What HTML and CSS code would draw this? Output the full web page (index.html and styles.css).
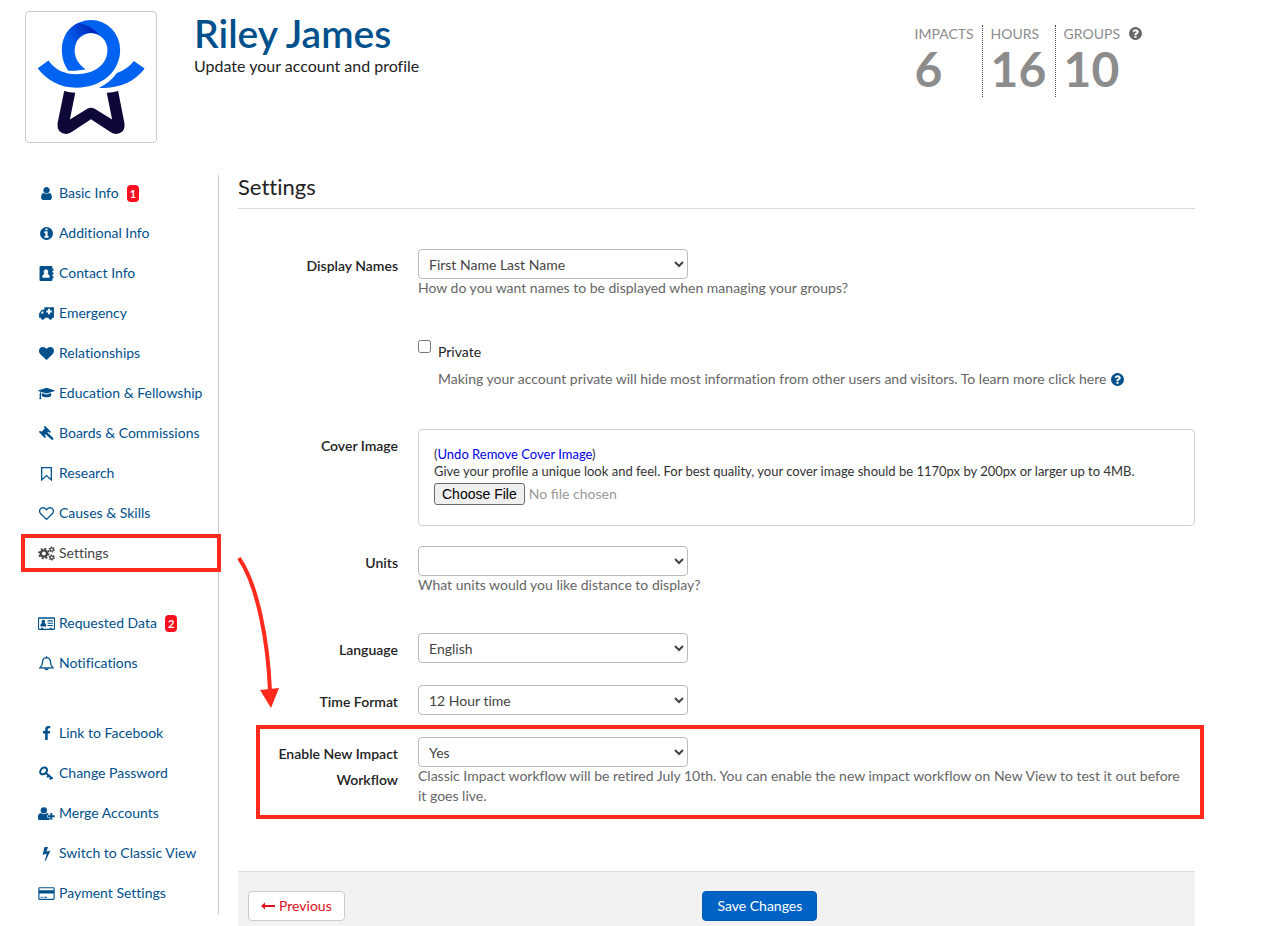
FILE: index.html
```
<!DOCTYPE html>
<html lang="en">

<head>
  <meta charset="UTF-8" />
  <meta name="viewport" content="width=device-width, initial-scale=1.0" />
  <title>Settings</title>
  <link rel="stylesheet" href="styles.css">
</head>

<body>
  <svg class="sprite" aria-hidden="true">
    <symbol id="question" viewBox="0 0 1792 1792">
      <path d="M1024 1376v-192q0-14-9-23t-23-9h-192q-14 0-23 9t-9 23v192q0 14 9 23t23 9h192q14 0 23-9t9-23zm256-672q0-88-55.500-163t-138.500-116-170-41q-243 0-371 213-15 24 8 42l132 100q7 6 19 6 16 0 25-12 53-68 86-92 34-24 86-24 48 0 85.500 26t37.500 59q0 38-20 61t-68 45q-63 28-115.500 86.500t-52.500 125.500v36q0 14 9 23t23 9h192q14 0 23-9t9-23q0-19 21.500-49.500t54.500-49.500q32-18 49-28.500t46-35 44.500-48 28-60.500 12.500-81zm384 192q0 209-103 385.500t-279.500 279.500-385.500 103-385.500-103-279.500-279.500-103-385.500 103-385.500 279.500-279.500 385.500-103 385.500 103 279.500 279.500 103 385.500z" />
    </symbol>
  </svg>

  <div class="page">
    <header class="header">
      <div class="avatar">
        <svg viewBox="79 37 388 388" aria-label="Logo">
          <defs>
            <linearGradient id="fold" x1="270" y1="75" x2="200" y2="115" gradientUnits="userSpaceOnUse">
              <stop offset="0" stop-color="#0026b8" />
              <stop offset="1" stop-color="#0062f0" />
            </linearGradient>
          </defs>
          <path fill="#0062f0" d="M205 212C191 192 186 172 186 150A87 89 0 0 1 360 150C360 215 305 263 230 263C180 263 142 242 114 205L146 182C165 210 195 223 228 223C282 223 322 196 322 150A49 50 0 0 0 224 150C224 175 237 195 257 208C240 212 220 213 205 212Z" />
          <path fill="url(#fold)" d="M236 69C260 74 282 87 299 106C272 93 228 98 224 148L186 148C187 110 206 82 236 69Z" />
          <path fill="#0062f0" d="M297 263C320 252 338 236 350 219C370 212 388 200 401 183L433 206C403 248 350 268 297 263Z" />
          <path fill="#0d0838" d="M193 273Q209 278 226 278L210 358L262 326Q273 320 284 326L336 358L320 278Q338 278 354 273L373 370Q376 399 348 401Q340 401 332 396L273 357L214 396Q206 401 198 401Q171 399 173 370Z" />
        </svg>
      </div>
      <div class="title">
        <h1>Riley James</h1>
        <p>Update your account and profile</p>
      </div>
      <dl class="stats">
        <div class="stat"><dt>IMPACTS</dt><dd>6</dd></div>
        <div class="stat"><dt>HOURS</dt><dd>16</dd></div>
        <div class="stat"><dt>GROUPS</dt><dd>10</dd></div>
        <svg class="help-icon"><use href="#question" /></svg>
      </dl>
    </header>

    <div class="columns">
      <nav class="sidebar">
        <ul>
          <li><a href="#"><span class="icon"><svg viewBox="0 0 1792 1792"><path d="M1536 1399q0 109-62.500 187t-150.500 78h-854q-88 0-150.500-78t-62.500-187q0-85 8.500-160.500t31.500-152 58.500-131 94-89 134.500-34.500q131 128 313 128t313-128q76 0 134.500 34.500t94 89 58.500 131 31.500 152 8.500 160.500zm-256-887q0 159-112.500 271.500t-271.500 112.500-271.500-112.500-112.500-271.500 112.500-271.500 271.500-112.500 271.500 112.500 112.500 271.500z" /></svg></span>Basic Info</a><span class="badge">1</span></li>
          <li><a href="#"><span class="icon"><svg viewBox="0 0 1792 1792"><path d="M1152 1376v-160q0-14-9-23t-23-9h-96v-512q0-14-9-23t-23-9h-320q-14 0-23 9t-9 23v160q0 14 9 23t23 9h96v320h-96q-14 0-23 9t-9 23v160q0 14 9 23t23 9h448q14 0 23-9t9-23zm-128-896v-160q0-14-9-23t-23-9h-192q-14 0-23 9t-9 23v160q0 14 9 23t23 9h192q14 0 23-9t9-23zm640 416q0 209-103 385.500t-279.500 279.500-385.500 103-385.500-103-279.500-279.500-103-385.500 103-385.500 279.500-279.500 385.500-103 385.500 103 279.500 279.500 103 385.500z" /></svg></span>Additional Info</a></li>
          <li><a href="#"><span class="icon"><svg viewBox="0 0 14 14"><path fill-rule="evenodd" d="M1.500 0h10q1 0 1 1v1.500h1v2h-1v1.500h1v2h-1v1.500h1v2h-1v1.500q0 1-1 1h-10q-1 0-1-1v-12q0-1 1-1zM6.500 3a2.200 2.400 0 0 0-1.400 4.200q-2.100.6-2.100 3 0 .8.800.8h5.400q.8 0 .8-.8 0-2.400-2.100-3a2.200 2.400 0 0 0-1.400-4.200z" /></svg></span>Contact Info</a></li>
          <li><a href="#"><span class="icon"><svg class="wide" viewBox="0 0 16 14"><path fill-rule="evenodd" d="M6 1h9v10h-1.300a2 2 0 0 1-3.900 0h-3.300a2 2 0 0 1-3.900 0h-1.600v-4l2.500-3.500h2.500zM9.500 2.500v1.700h-1.700v1.800h1.700v1.700h1.800v-1.700h1.700v-1.800h-1.700v-1.700zM4 4.800l-1.500 2.200h2.500v-2.200z" /><circle cx="4.500" cy="11.200" r="1.500" /><circle cx="11.700" cy="11.200" r="1.500" /></svg></span>Emergency</a></li>
          <li><a href="#"><span class="icon"><svg viewBox="0 0 1792 1792"><path d="M896 1664q-26 0-44-18l-624-602q-10-8-27.500-26t-55.500-65.500-68-97.500-53.500-121-23.500-138q0-220 127-344t351-124q62 0 126.500 21.500t120 58 95.500 68.500 76 68q36-36 76-68t95.500-68.500 120-58 126.500-21.500q224 0 351 124t127 344q0 221-229 450l-623 600q-18 18-44 18z" /></svg></span>Relationships</a></li>
          <li><a href="#"><span class="icon"><svg class="wide" viewBox="0 0 2304 1792"><path d="M1774 836l18 316q4 69-82 128t-235 93.500-323 34.500-323-34.500-235-93.500-82-128l18-316 574 181q22 7 48 7t48-7zm530-324q0 23-22 31l-1120 352q-4 1-10 1t-10-1l-652-206q-43 34-71 111.500t-34 178.500q63 36 63 109 0 69-58 107l58 433q2 14-8 25-9 11-24 11h-192q-15 0-24-11-10-11-8-25l58-433q-58-38-58-107 0-73 65-111 11-207 98-330l-333-104q-22-8-22-31t22-31l1120-352q4-1 10-1t10 1l1120 352q22 8 22 31z" /></svg></span>Education &amp; Fellowship</a></li>
          <li><a href="#"><span class="icon"><svg viewBox="0 0 14 14"><g fill="none" stroke="currentColor"><path d="M3.400 7.400l4-4" stroke-width="4.400" /><path d="M1 5.500l4.500 4.500M5.500 1l4.500 4.500" stroke-width="1.800" stroke-linecap="round" /><path d="M6 6l6.300 5.800" stroke-width="2.400" stroke-linecap="round" /></g></svg></span>Boards &amp; Commissions</a></li>
          <li><a href="#"><span class="icon"><svg class="line" viewBox="0 0 14 14"><path d="M2.500 1.500h9v11.500l-4.500-4-4.500 4z" /></svg></span>Research</a></li>
          <li><a href="#"><span class="icon"><svg class="line" viewBox="0 0 14 14"><path d="M7 12.500l-5.400-5.200c-2-2.400-.9-5.700 2-5.800 1.700 0 2.700 1.200 3.400 2 .7-.8 1.700-2 3.400-2 2.900.1 4 3.400 2 5.800z" /></svg></span>Causes &amp; Skills</a></li>
          <li class="active"><a href="#"><span class="icon"><svg class="wide" viewBox="0 0 16 14"><circle cx="5.500" cy="7" r="3" fill="none" stroke="currentColor" stroke-width="2.200" /><circle cx="5.500" cy="7" r="4.600" fill="none" stroke="currentColor" stroke-width="1.600" stroke-dasharray="1.800 1.813" /><circle cx="13" cy="3.200" r="1.600" fill="none" stroke="currentColor" stroke-width="1.200" /><circle cx="13" cy="3.200" r="2.400" fill="none" stroke="currentColor" stroke-width="1" stroke-dasharray="1.200 1.313" /><circle cx="13" cy="10.800" r="1.600" fill="none" stroke="currentColor" stroke-width="1.200" /><circle cx="13" cy="10.800" r="2.400" fill="none" stroke="currentColor" stroke-width="1" stroke-dasharray="1.200 1.313" /></svg></span>Settings</a></li>
        </ul>
        <ul>
          <li><a href="#"><span class="icon"><svg class="wide" viewBox="0 0 16 14"><path fill-rule="evenodd" d="M1 1h14q1 0 1 1v10q0 1-1 1h-14q-1 0-1-1v-10q0-1 1-1zM1 2.500v9.500h2v-1h2v1h6v-1h2v1h2v-9.500z" /><circle cx="5" cy="5.200" r="1.700" /><path d="M2.200 9.800q0-3 1.500-3.300h2.600q1.500.3 1.500 3.300zM9 4h5v1h-5zM9 6.200h5v1h-5zM9 8.400h5v1h-5z" /></svg></span>Requested Data</a><span class="badge">2</span></li>
          <li><a href="#"><span class="icon"><svg class="line" viewBox="0 0 14 14"><path d="M7 .2v1.300M1 11h12q-2.300-2-2.300-5.300 0-4-3.700-4.200-3.700.2-3.700 4.200 0 3.300-2.300 5.300zM5.500 11.200q0 1.600 1.500 1.600t1.500-1.600" /></svg></span>Notifications</a></li>
        </ul>
        <ul>
          <li><a href="#"><span class="icon"><svg viewBox="0 0 1792 1792"><path d="M1343 12v264h-157q-86 0-116 36t-30 108v189h293l-39 296h-254v759h-306v-759h-255v-296h255v-218q0-186 104-288.500t277-102.500q147 0 228 12z" /></svg></span>Link to Facebook</a></li>
          <li><a href="#"><span class="icon"><svg viewBox="0 0 14 14"><g fill="none" stroke="currentColor"><ellipse cx="4.300" cy="4.600" rx="3.600" ry="2.700" transform="rotate(-45 4.300 4.600)" stroke-width="1.900" /><path d="M6.300 6.500l6.500 5.500M9 8.800l-1.300 1.800M11.400 10.800l-1.300 1.800" stroke-width="1.800" /></g></svg></span>Change Password</a></li>
          <li><a href="#"><span class="icon"><svg class="wide" viewBox="0 0 16 14"><circle cx="5.500" cy="4" r="3" /><path d="M2.600 6.500q3 2.400 5.900 0 .8.200 1.300.8v1.200h-1v2.500h2.200v1.400q-.4.600-1 .6h-9q-1.200-.2-1.200-2 0-4 2.800-4.500zM11.600 6.500h1.800v2.200h2.300v1.800h-2.300v2.300h-1.800v-2.300h-2.200v-1.800h2.200z" /></svg></span>Merge Accounts</a></li>
          <li><a href="#"><span class="icon"><svg viewBox="0 0 1792 1792"><path d="M1333 566q18 20 7 44l-540 1157q-13 25-42 25-4 0-14-2-17-5-25.500-19t-4.500-30l197-808-406 101q-4 1-12 1-18 0-31-11-18-15-13-39l201-825q4-14 16-23t28-9h328q19 0 32 12.500t13 29.500q0 8-5 18l-171 463 396-98q8-2 12-2 19 0 34 15z" /></svg></span>Switch to Classic View</a></li>
          <li><a href="#"><span class="icon"><svg class="wide" viewBox="0 0 16 14"><path fill-rule="evenodd" d="M1.500 1h13q1.200 0 1.200 1.200v9.600q0 1.200-1.200 1.200h-13q-1.200 0-1.200-1.200v-9.600q0-1.200 1.200-1.200zM1.400 2v2h13.200v-2zM1.400 7v5h13.200v-5zM2.500 10h2v1h-2zM5.500 10h3v1h-3z" /></svg></span>Payment Settings</a></li>
        </ul>
      </nav>

      <main class="main">
        <h2>Settings</h2>
        <form>
          <div class="row">
            <label class="name" for="display">Display Names</label>
            <div class="field">
              <select id="display"><option>First Name Last Name</option><option>First Name Last Initial</option></select>
              <p class="hint">How do you want names to be displayed when managing your groups?</p>
            </div>
          </div>
          <div class="row">
            <div class="field private">
              <input type="checkbox" id="private">
              <div>
                <label for="private">Private</label>
                <p class="hint">Making your account private will hide most information from other users and visitors. To learn more click here <a href="#" aria-label="Help"><svg class="help-icon"><use href="#question" /></svg></a></p>
              </div>
            </div>
          </div>
          <div class="row cover-row">
            <label class="name" for="cover">Cover Image</label>
            <div class="field cover">
              <div>(<a href="#">Undo Remove Cover Image</a>)</div>
              <div>Give your profile a unique look and feel. For best quality, your cover image should be 1170px by 200px or larger up to 4MB.</div>
              <input type="file" id="cover">
            </div>
          </div>
          <div class="row">
            <label class="name" for="units">Units</label>
            <div class="field">
              <select id="units"><option></option><option>Miles</option><option>Kilometers</option></select>
              <p class="hint">What units would you like distance to display?</p>
            </div>
          </div>
          <div class="row">
            <label class="name" for="language">Language</label>
            <div class="field">
              <select id="language"><option>English</option></select>
            </div>
          </div>
          <div class="row">
            <label class="name" for="time">Time Format</label>
            <div class="field">
              <select id="time"><option>12 Hour time</option><option>24 Hour time</option></select>
            </div>
          </div>
          <div class="row workflow">
            <label class="name" for="workflow">Enable New Impact Workflow</label>
            <div class="field">
              <select id="workflow"><option>Yes</option><option>No</option></select>
              <p class="hint">Classic Impact workflow will be retired July 10th. You can enable the new impact workflow on New View to test it out before it goes live.</p>
            </div>
            <!-- arrow from the Settings link down to this row -->
            <svg class="arrow" viewBox="0 0 44 154">
              <path d="M3 3C22 31 32 87 34 136" fill="none" stroke="#ff2a1c" stroke-width="4" />
              <path d="M24 135L43 133L35 153Z" fill="#ff2a1c" />
            </svg>
          </div>
          <div class="actions">
            <button type="button" class="btn previous"><svg viewBox="0 0 14 10"><path d="M0 5l4-3.500v2.500h10v2h-10v2.500z" /></svg>Previous</button>
            <div class="save"><button type="submit" class="btn primary">Save Changes</button></div>
          </div>
        </form>
      </main>
    </div>
  </div>
</body>

</html>
```
FILE: styles.css
```
* {
  box-sizing: border-box;
}

body {
  margin: 0;
  background: #fff;
  color: #222;
  font-family: Lato, "Liberation Sans", sans-serif;
  font-size: 14px;
  line-height: 20px;
  font-variant-ligatures: none;
}

h1,
h2,
p,
ul,
dl,
dd {
  margin: 0;
  padding: 0;
}

a {
  color: #00508c;
  text-decoration: none;
}

svg {
  fill: currentColor;
}

.sprite {
  display: none;
}

.page {
  max-width: 1170px;
  margin: 0 25px;
  padding-top: 11px;
}

/* header */
.header {
  display: flex;
  align-items: flex-start;
  min-height: 164px;
}

.avatar {
  width: 132px;
  height: 132px;
  border: 1px solid #ccc;
  border-radius: 4px;
}

.avatar svg {
  display: block;
}

.title {
  flex: 1;
  margin-left: 37px;
}

.title h1 {
  color: #00508c;
  font-size: 39px;
  font-weight: 600;
  line-height: 45px;
}

.title p {
  font-size: 16px;
}

.stats {
  display: flex;
  margin: 14px 52px 0 0;
  color: #8c8c8c;
}

.stat {
  height: 72px;
  padding: 0 8px;
}

.stat + .stat {
  min-width: 73px;
  border-left: 1px dotted #444;
}

.stat dt {
  line-height: 18px;
}

.stat dd {
  font-size: 48px;
  font-weight: bold;
  line-height: 52px;
}

.help-icon {
  width: 15px;
  height: 15px;
  vertical-align: -3px;
}

.stats .help-icon {
  color: #666;
  margin-top: 1px;
}

.columns {
  display: flex;
  align-items: flex-start;
}

/* sidebar */
.sidebar {
  flex: 0 0 194px;
  border-right: 1px solid #ccc;
}

.sidebar ul {
  list-style: none;
}

.sidebar ul + ul {
  margin-top: 34px;
}

.sidebar li {
  display: flex;
  align-items: center;
  height: 36px;
  margin-bottom: 4px;
  padding-left: 12px;
  white-space: nowrap;
}

.sidebar a {
  display: flex;
  align-items: center;
}

.icon {
  display: flex;
  justify-content: center;
  width: 18px;
  margin-right: 4px;
}

.icon svg {
  width: 15px;
  height: 15px;
}

.icon .wide {
  width: 17px;
}

.icon .line {
  fill: none;
  stroke: currentColor;
  stroke-width: 1.2;
}

.badge {
  margin-left: 8px;
  padding: 0 3px;
  border-radius: 4px;
  background: #fa0f1e;
  color: #fff;
  font-size: 11px;
  font-weight: bold;
  line-height: 17px;
}

.sidebar .active {
  position: relative;
}

.active a {
  color: #444;
}

.active::after,
.workflow::after {
  content: "";
  position: absolute;
  border: 4px solid #ff2a1c;
  pointer-events: none;
}

.active::after {
  top: -1px;
  right: -3px;
  bottom: -1px;
  left: -4px;
}

/* form */
.main {
  flex: 1;
  min-width: 0;
  margin-left: 19px;
}

.main h2 {
  margin-bottom: 40px;
  padding-bottom: 9px;
  border-bottom: 1px solid #d9d9d9;
  font-size: 22px;
  font-weight: normal;
  line-height: 24px;
}

.row {
  display: grid;
  grid-template-columns: 160px 1fr;
  column-gap: 20px;
  margin-bottom: 22px;
}

.name {
  padding: 4px 0 0 20px;
  font-weight: 600;
  line-height: 26px;
  text-align: right;
}

.field {
  grid-column: 2;
}

.row select {
  display: block;
  width: 270px;
  height: 30px;
  padding: 0 6px;
  border: 1px solid #bbb;
  border-radius: 4px;
  background: #fff;
  color: #444;
  font: inherit;
}

.hint {
  margin: -1px 0 16px;
  padding-right: 4px;
  color: #666;
}

.private {
  display: flex;
  padding-top: 4px;
}

.private input {
  width: 13px;
  height: 13px;
  margin: 0 7px 0 0;
}

.private label {
  display: block;
  line-height: 24px;
}

.private .hint {
  margin: 5px 0 18px;
}

.cover-row {
  margin-bottom: 20px;
}

.cover {
  padding: 16px 15px 20px;
  border: 1px solid #d0d0d0;
  border-radius: 4px;
  color: #333;
  font-size: 13px;
  line-height: 17px;
}

.cover a {
  color: #0000e6;
}

.cover input {
  display: block;
  margin-top: 3px;
  color: #999;
  font: 14px/20px Lato, "Liberation Sans", sans-serif;
}

.cover input::file-selector-button {
  height: 22px;
  padding: 0 7px;
  border: 1px solid #6b6b6b;
  border-radius: 3px;
  background: #efefef;
  color: #000;
  font: 14px "Liberation Sans", Arial, sans-serif;
}

.workflow {
  position: relative;
}

.workflow::after {
  top: -12px;
  right: -9px;
  bottom: 3px;
  left: 18px;
}

.arrow {
  position: absolute;
  top: -182px;
  left: -2px;
  width: 44px;
  height: 154px;
}

.actions {
  display: flex;
  margin-top: 49px;
  padding: 19px 20px 5px 10px;
  border-top: 1px solid #ddd;
  background: #f2f2f2;
}

.save {
  flex: 1;
  text-align: center;
}

.btn {
  height: 30px;
  padding: 0 12px;
  border: 1px solid #ccc;
  border-radius: 4px;
  background: #fff;
  font: inherit;
}

.previous {
  color: #e01020;
}

.previous svg {
  width: 14px;
  height: 10px;
  margin-right: 4px;
}

.primary {
  padding: 0 14px;
  border-color: #005cb8;
  background: #0062c4;
  color: #fff;
}
```
